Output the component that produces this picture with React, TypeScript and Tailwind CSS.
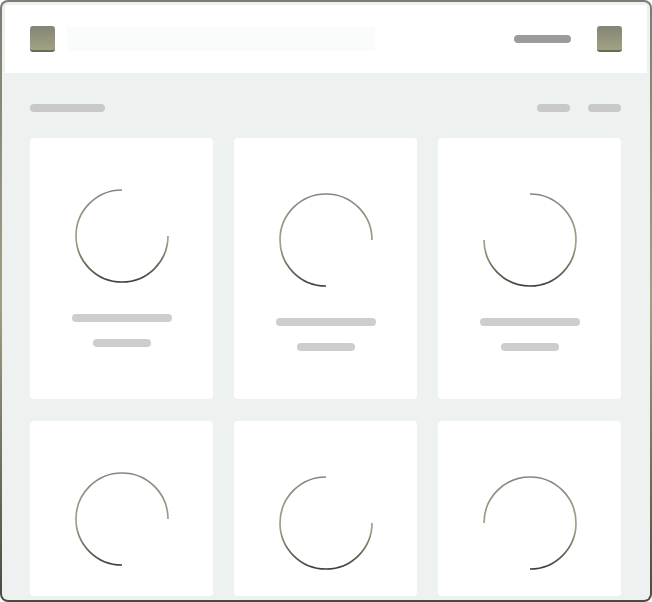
import { useId } from "react";

type Gap = "tr" | "br" | "tl" | "bl";

const arcPath: Record<Gap, string> = {
  tr: "M 93 47 A 46 46 0 1 1 47 1",
  br: "M 47 93 A 46 46 0 1 1 93 47",
  tl: "M 47 1 A 46 46 0 1 1 1 47",
  bl: "M 1 47 A 46 46 0 1 1 47 93",
};

const Spinner = ({ gap }: { gap: Gap }) => {
  const id = useId();
  return (
    <svg width="94" height="94" viewBox="0 0 94 94" fill="none">
      <defs>
        <linearGradient id={id} x1="0" y1="0" x2="0" y2="94" gradientUnits="userSpaceOnUse">
          <stop offset="0" stopColor="#84847e" />
          <stop offset="0.55" stopColor="#a3a386" />
          <stop offset="1" stopColor="#3f3f38" />
        </linearGradient>
      </defs>
      <path d={arcPath[gap]} stroke={`url(#${id})`} strokeWidth="1.7" strokeLinecap="butt" />
    </svg>
  );
};

const Square = () => (
  <div className="w-[25px] h-[26px] rounded-[3px] bg-gradient-to-b from-[#848478] to-[#a2a283] border-b-2 border-[#6a6a56]" />
);

const cards: { gap: Gap; low: boolean }[] = [
  { gap: "tr", low: false },
  { gap: "br", low: true },
  { gap: "tl", low: true },
  { gap: "br", low: false },
  { gap: "tr", low: true },
  { gap: "bl", low: true },
];

const Card = ({ gap, low }: { gap: Gap; low: boolean }) => (
  <div className="h-full bg-white rounded-[4px] flex flex-col items-center overflow-hidden">
    <div className={low ? "mt-[55px] shrink-0" : "mt-[51px] shrink-0"}>
      <Spinner gap={gap} />
    </div>
    <div className="mt-[31px] w-[100px] h-2 shrink-0 rounded-full bg-[#cdcdcd]" />
    <div className="mt-[17px] w-[58px] h-2 shrink-0 rounded-full bg-[#cdcdcd]" />
  </div>
);

export default function App() {
  return (
    <div className="w-[652px] h-[602px] rounded-[8px] p-[2px] bg-gradient-to-b from-[#7c7c75] via-[#a0a084] to-[#4a4a42]">
      <div className="w-full h-full rounded-[6px] bg-[#edf1f0] overflow-hidden">
        <div className="pt-[3px] px-[3px]">
          <header className="h-[68px] bg-white flex items-center justify-between pl-[25px] pr-[25px]">
            <div className="flex items-center gap-3">
              <Square />
              <div className="w-[308px] h-6 bg-[#fafcfc]" />
            </div>
            <div className="flex items-center gap-[26px]">
              <div className="w-[57px] h-2 rounded-full bg-[#9b9b9b]" />
              <Square />
            </div>
          </header>
        </div>
        <main className="ml-[28px] w-[591px]">
          <div className="mt-[31px] flex items-center justify-between h-2">
            <div className="w-[75px] h-2 rounded-full bg-[#c8c8c8]" />
            <div className="flex gap-[18px]">
              <div className="w-[33px] h-2 rounded-full bg-[#c8c8c8]" />
              <div className="w-[33px] h-2 rounded-full bg-[#c8c8c8]" />
            </div>
          </div>
          <div className="mt-[26px] grid grid-cols-[183px_183px_183px] grid-rows-[261px_175px] gap-x-[21px] gap-y-[22px]">
            {cards.map((c, i) => (
              <Card key={i} gap={c.gap} low={c.low} />
            ))}
          </div>
        </main>
      </div>
    </div>
  );
}
